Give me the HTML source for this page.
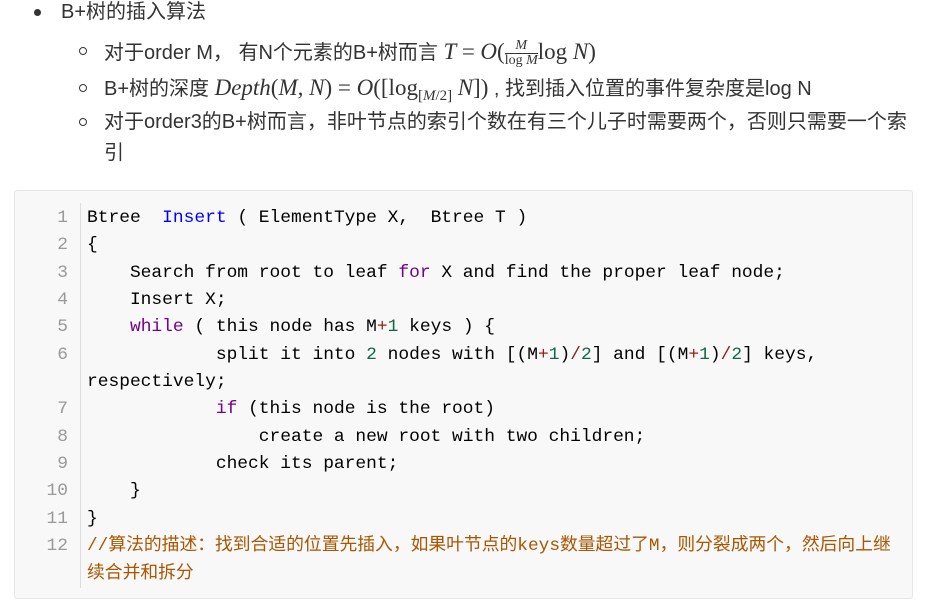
<!DOCTYPE html>
<html><head><meta charset="utf-8"><style>
body{margin:0;width:942px;height:614px;background:#fff;position:relative;overflow:hidden;font-family:"Liberation Sans","Noto Sans CJK SC",sans-serif;color:#333;}
.t{position:absolute;font-size:20px;white-space:nowrap;line-height:24px}
.m{font-family:"Liberation Serif",serif;font-style:italic;font-size:23px}
.r{font-family:"Liberation Serif",serif;font-size:23px}
.dot{position:absolute;width:7px;height:7px;border-radius:50%;background:#333}
.circ{position:absolute;width:6px;height:6px;border-radius:50%;border:1.5px solid #333}
.box{position:absolute;left:14px;top:190px;width:897px;height:407px;background:#f8f8f8;border:1px solid #e6e6e6;border-radius:3px}
.gut{position:absolute;left:80px;top:203px;width:1px;height:385px;background:#ddd}
.ln{position:absolute;left:30px;width:38px;text-align:right;color:#999;font-family:"Liberation Mono",monospace;font-size:17.9px;line-height:27.3px}
.c{position:absolute;left:87px;font-family:"Liberation Mono","Noto Sans CJK SC",monospace;font-size:17.9px;line-height:27.3px;white-space:pre;color:#000}
.k{color:#708}.d{color:#00f}.n{color:#164}.o{color:#981a1a}.cm{color:#a50}
</style></head><body>
<div class="dot" style="left:34px;top:9px"></div>
<div class="t" style="left:61px;top:0px">B+树的插入算法</div>
<div class="circ" style="left:79px;top:47px"></div>
<div class="t" style="left:104px;top:39px">对于order M， 有N个元素的B+树而言 <span class="m">T</span> <span class="r">=</span> <span class="m">O</span><span class="r">(</span><span style="display:inline-block;vertical-align:middle;text-align:center;font-family:'Liberation Serif',serif;font-size:14px;line-height:14px"><i>M</i><br><span style="border-top:1px solid #333;display:block">log <i>M</i></span></span><span class="r">log </span><span class="m">N</span><span class="r">)</span></div>
<div class="circ" style="left:79px;top:84px"></div>
<div class="t" style="left:104px;top:76px">B+树的深度 <span class="m">Depth</span><span class="r">(</span><span class="m">M, N</span><span class="r">) = </span><span class="m">O</span><span class="r">([log</span><span class="r" style="font-size:15px;vertical-align:-5px">[<i>M</i>/2]</span> <span class="m">N</span><span class="r">])</span> , 找到插入位置的事件复杂度是log N</div>
<div class="circ" style="left:79px;top:118px"></div>
<div class="t" style="left:104px;top:110px">对于order3的B+树而言，非叶节点的索引个数在有三个儿子时需要两个，否则只需要一个索</div>
<div class="t" style="left:104px;top:141px">引</div>
<div class="box"></div>
<div class="gut"></div>
<div class="ln" style="top:205px">1</div>
<div class="ln" style="top:232px">2</div>
<div class="ln" style="top:260px">3</div>
<div class="ln" style="top:287px">4</div>
<div class="ln" style="top:314px">5</div>
<div class="ln" style="top:342px">6</div>
<div class="ln" style="top:396px">7</div>
<div class="ln" style="top:424px">8</div>
<div class="ln" style="top:451px">9</div>
<div class="ln" style="top:478px">10</div>
<div class="ln" style="top:506px">11</div>
<div class="ln" style="top:533px">12</div>
<div class="c" style="top:205px">Btree  <span class="d">Insert</span> ( ElementType X,  Btree T )</div>
<div class="c" style="top:232px">{</div>
<div class="c" style="top:260px">    Search from root to leaf <span class="k">for</span> X and find the proper leaf node;</div>
<div class="c" style="top:287px">    Insert X;</div>
<div class="c" style="top:314px">    <span class="k">while</span> ( this node has M<span class="o">+</span><span class="n">1</span> keys ) {</div>
<div class="c" style="top:342px">            split it into <span class="n">2</span> nodes with [(M<span class="o">+</span><span class="n">1</span>)<span class="o">/</span><span class="n">2</span>] and [(M<span class="o">+</span><span class="n">1</span>)<span class="o">/</span><span class="n">2</span>] keys,</div>
<div class="c" style="top:369px">respectively;</div>
<div class="c" style="top:396px">            <span class="k">if</span> (this node is the root)</div>
<div class="c" style="top:424px">                create a new root with two children;</div>
<div class="c" style="top:451px">            check its parent;</div>
<div class="c" style="top:478px">    }</div>
<div class="c" style="top:506px">}</div>
<div class="c cm" style="top:533px;font-size:17.8px">//算法的描述：找到合适的位置先插入，如果叶节点的keys数量超过了M，则分裂成两个，然后向上继</div>
<div class="c cm" style="top:561px;font-size:17.8px">续合并和拆分</div>
</body></html>
